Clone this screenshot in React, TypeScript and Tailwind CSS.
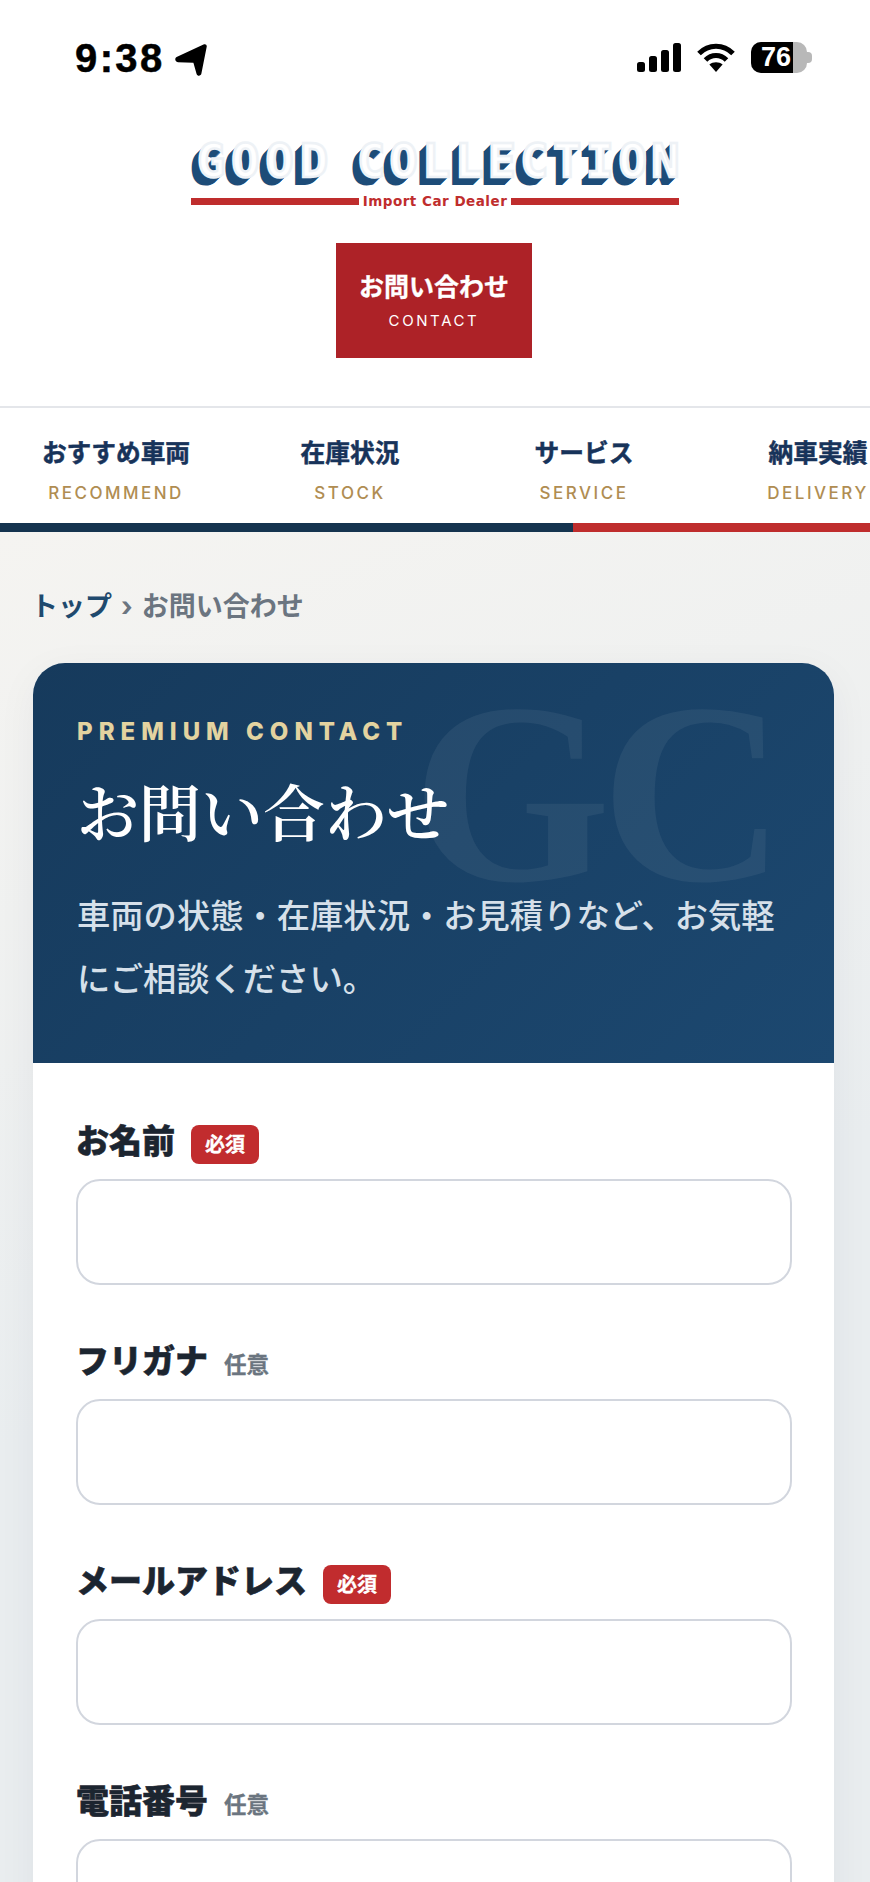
const SANS = "font-['Inter','Noto_Sans_CJK_JP',sans-serif]";

const navItems = [
  { ja: "おすすめ車両", en: "RECOMMEND" },
  { ja: "在庫状況", en: "STOCK" },
  { ja: "サービス", en: "SERVICE" },
  { ja: "納車実績", en: "DELIVERY" },
];

const fields = [
  { label: "お名前", required: true },
  { label: "フリガナ", required: false },
  { label: "メールアドレス", required: true },
  { label: "電話番号", required: false },
];

const StatusBar = () => (
  <div className="h-[120px] pt-[38px] pl-[75px] pr-[58px] flex justify-between items-start">
    <div className="flex items-center h-[40px]">
      <span className="font-['Liberation_Sans',sans-serif] font-bold text-[40px] leading-[40px] tracking-[2.4px] text-black [-webkit-text-stroke:0.5px_#000000]">9:38</span>
      <svg className="ml-[10px] mt-[3px]" width="32" height="32" viewBox="0 0 32 32">
        <path d="M28.5 .6c1.8-1 3.6.2 3.2 2.2L26.4 29.6c-.4 2.6-4 3-4.8.4L18.4 18.8 3 18.2C.2 18-.8 14.4 1.6 13L28.5 .6z" fill="#000" />
      </svg>
    </div>
    <div className="flex items-center h-[40px] mt-[-1px]">
      <svg width="44" height="29" viewBox="0 0 44 29" fill="#000">
        <rect x="0" y="19" width="8" height="10" rx="2.5" />
        <rect x="12" y="13" width="8" height="16" rx="2.5" />
        <rect x="24" y="7" width="8" height="22" rx="2.5" />
        <rect x="36" y="0" width="8" height="29" rx="2.5" />
      </svg>
      <svg className="ml-[16px]" width="38" height="29" viewBox="0 0 38 29" fill="none" stroke="#000" strokeWidth="5">
        <path d="M2 10.5C11.5 .8 26.5 .8 36 10.5" />
        <path d="M8.5 17C14.5 11 23.5 11 29.5 17" />
        <path d="M19 29l-6.6-7.5c3.6-3 9.6-3 13.2 0L19 29z" fill="#000" stroke="none" />
      </svg>
      <div className="ml-[16px] relative flex items-center">
        <div className="w-[56px] h-[31px] rounded-[10px] overflow-hidden flex bg-[#b8b8b8]">
          <div className="w-[42px] bg-black" />
        </div>
        <div className="w-[5px] h-[11px] rounded-r-[4px] bg-[#b8b8b8]" />
        <span className="absolute left-[10px] top-0 h-[31px] leading-[31px] font-['Liberation_Sans',sans-serif] font-bold text-[27px] text-white">76</span>
      </div>
    </div>
  </div>
);

const Logo = () => (
  <div className="mt-[21px] w-[488px] mx-auto">
    <div className="h-[44px] whitespace-pre font-['DejaVu_Sans_Mono',monospace] font-bold text-[47px] leading-[40px] tracking-[4.4px] pl-[6px] [word-spacing:-10px] text-white [-webkit-text-stroke:2.5px_#eef2f6] [text-shadow:-1px_1px_0_#1d4c78,-2px_2px_0_#1d4c78,-3px_3px_0_#1d4c78,-4px_4px_0_#1d4c78,-5px_5px_0_#1d4c78,-6px_6px_0_#1d4c78,-7px_7px_0_#1d4c78,-8px_8px_0_#1d4c78]">
      <span className="tracking-[6px]">GOOD</span> COLLECTION
    </div>
    <div className="mt-[8px] flex items-center gap-[4px]">
      <div className="flex-1 h-[7px] bg-[#bf2d2d]" />
      <span className="font-['DejaVu_Sans',sans-serif] font-bold text-[13.5px] leading-[16px] tracking-[0.5px] text-[#bf2d2d]">Import Car Dealer</span>
      <div className="flex-1 h-[7px] bg-[#bf2d2d]" />
    </div>
  </div>
);

const Badge = () => (
  <span className="w-[68px] h-[39px] rounded-[8px] bg-[#c12c2e] text-white text-[20px] font-bold flex items-center justify-center [-webkit-text-stroke:0.3px_#ffffff]">必須</span>
);

const Field = ({ label, required }: { label: string; required: boolean }) => (
  <div>
    <div className="h-[39px] flex items-center gap-[16px]">
      <span className="text-[33px] leading-[39px] font-black text-[#1c2530] mb-[7px] [-webkit-text-stroke:0.6px_#1c2530]">{label}</span>
      {required ? <Badge /> : <span className="text-[22.5px] font-bold text-[#6b7580] [-webkit-text-stroke:0.3px_#6b7580]">任意</span>}
    </div>
    <div className="mt-[15px] h-[106px] rounded-[24px] border-2 border-[#d2d6de] bg-white" />
  </div>
);

export default function App() {
  return (
    <div className={`w-[870px] h-[1882px] overflow-hidden bg-white ${SANS}`}>
      <StatusBar />
      <Logo />

      <div className="mt-[34px] mx-auto w-[196px] h-[115px] -translate-x-px bg-[#ad2227] flex flex-col items-center justify-center text-white">
        <span className="text-[25px] leading-[36px] font-bold [-webkit-text-stroke:0.3px_#ffffff]">お問い合わせ</span>
        <span className="mt-[5px] text-[15px] leading-[22px] tracking-[2.6px]">CONTACT</span>
      </div>

      <div className="mt-[48px] border-t-2 border-[#e4e6ea] h-[117px] flex overflow-hidden -ml-px">
        {navItems.map((item) => (
          <div key={item.en} className="w-[234px] shrink-0 pt-[27px] flex flex-col items-center">
            <span className="text-[24.7px] leading-[36px] font-bold text-[#17335a] whitespace-nowrap [-webkit-text-stroke:0.5px_#17335a]">{item.ja}</span>
            <span className="mt-[10px] text-[17px] leading-[24px] font-medium tracking-[2.5px] text-[#b08d52]">{item.en}</span>
          </div>
        ))}
      </div>
      <div className="h-[9px] flex">
        <div className="w-[573px] bg-[#15344f]" />
        <div className="flex-1 bg-[#bf2d2d]" />
      </div>

      <div className="h-[1350px] px-[33px] bg-[linear-gradient(160deg,#f5f4f1_0%,#e9edef_55%)]">
        <div className="pt-[57px] h-[131px] -ml-[2px] text-[27px] leading-[36px] font-bold">
          <span className="text-[#1f4a6e]">トップ</span>
          <span className="text-[#6b7580] mx-[9px]">›</span>
          <span className="text-[#6b7580]">お問い合わせ</span>
        </div>

        <div className="w-[801px] rounded-t-[32px] bg-white shadow-[0_10px_40px_rgba(20,40,70,0.05)] overflow-hidden">
          <div className="relative h-[400px] px-[44px] pt-[56px] overflow-hidden bg-[linear-gradient(135deg,#163a5c,#1c4870)]">
            <span className="absolute left-[379px] top-[1px] origin-left scale-x-[0.99] font-['Liberation_Serif',serif] font-bold text-[258px] leading-[258px] tracking-[-10px] text-white/[0.06]">GC</span>
            <div className="relative">
              <div className="text-[24px] leading-[26px] font-extrabold tracking-[6px] text-[#e3d3a0]">PREMIUM CONTACT</div>
              <h1 className="mt-[26px] text-[62px] leading-[80px] font-semibold text-white font-['Noto_Serif_CJK_JP',serif]">お問い合わせ</h1>
              <p className="mt-[34px] text-[33.3px] leading-[63px] font-medium text-[#d6e0ea]">車両の状態・在庫状況・お見積りなど、お気軽にご相談ください。</p>
            </div>
          </div>
          <div className="pl-[43px] pr-[42px] pt-[62px] pb-[40px] flex flex-col gap-[60px]">
            {fields.map((f) => (
              <Field key={f.label} label={f.label} required={f.required} />
            ))}
          </div>
        </div>
      </div>
    </div>
  );
}
